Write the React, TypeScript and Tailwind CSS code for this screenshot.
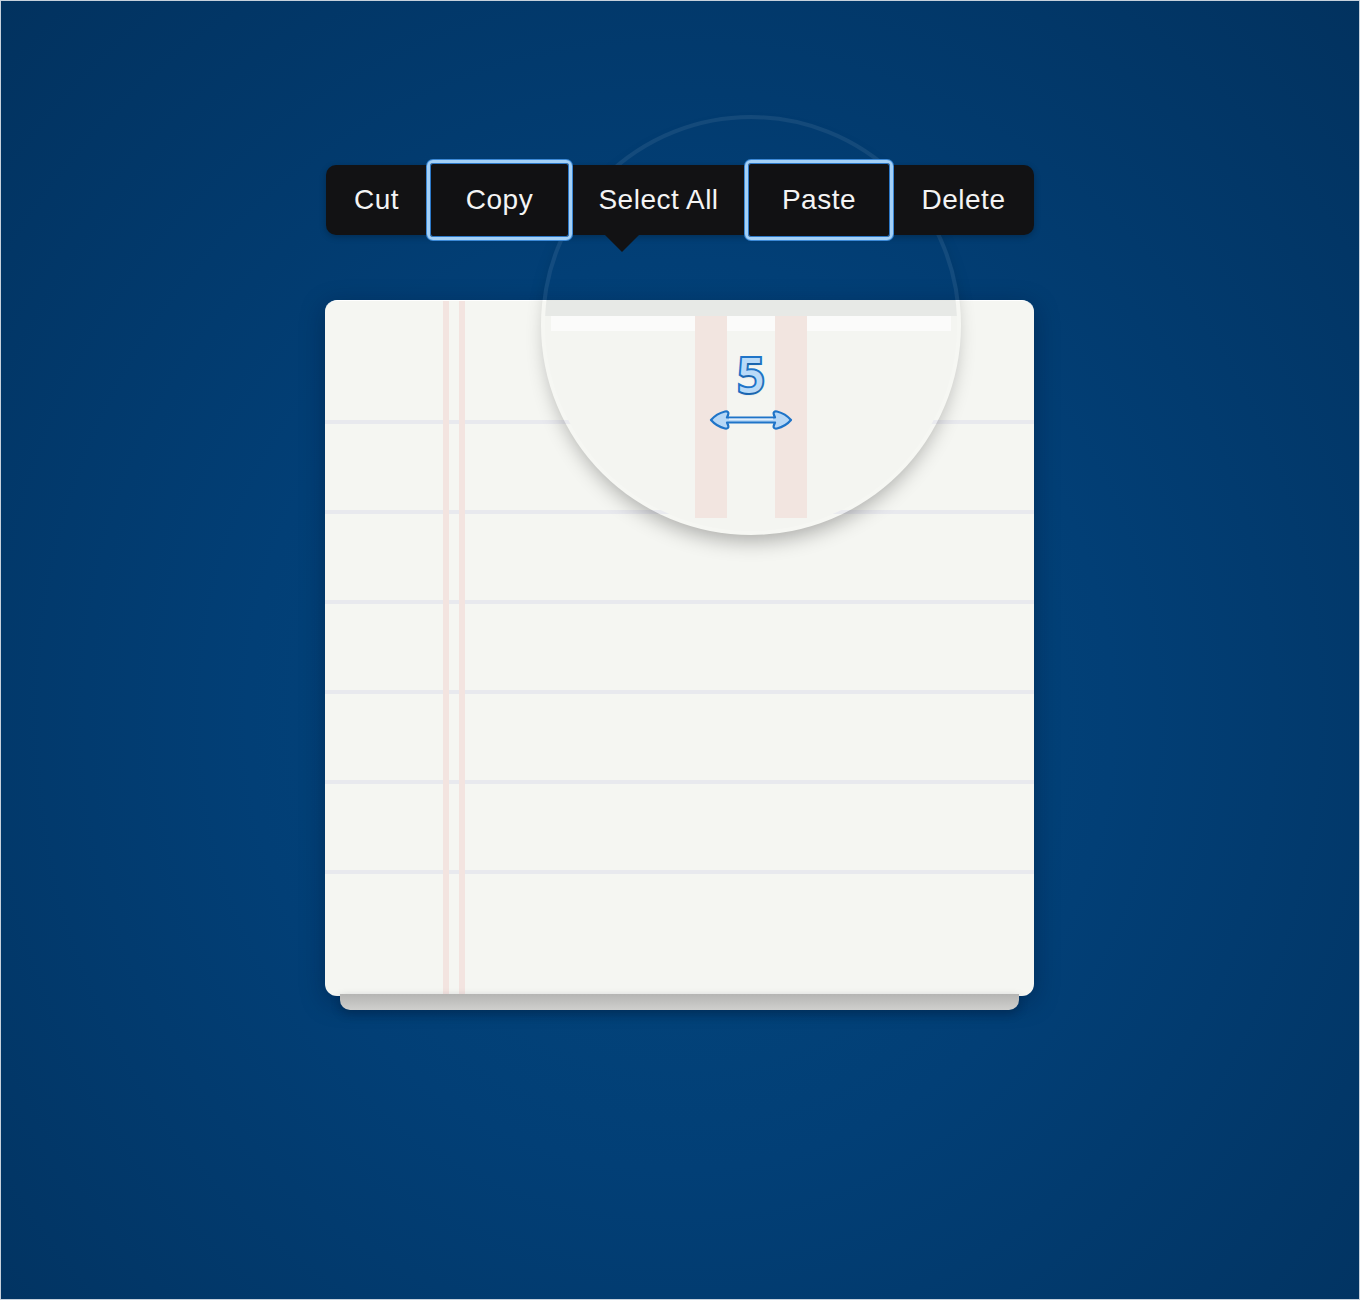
import React from 'react';

const menuFont = { fontFamily: '"Liberation Sans", Arial, sans-serif' };

function MenuItem({ label, width, active }: { label: string; width: string; active?: boolean }) {
  if (active) {
    return (
      <div className={`${width} h-[80px] self-center flex items-center justify-center rounded-[6px] border-[3px] border-[#a3d0f7] bg-[#111113] ring-1 ring-[#3b88d6] shadow-[inset_0_0_0_1px_#2c78c8]`}>
        <span className="text-[28px] tracking-[0.5px] text-[#f4f4f4]">{label}</span>
      </div>
    );
  }
  return (
    <div className={`${width} flex items-center justify-center`}>
      <span className="text-[28px] tracking-[0.5px] text-[#f4f4f4]">{label}</span>
    </div>
  );
}

function DoubleArrow() {
  return (
    <svg width="86" height="26" viewBox="0 0 86 26">
      <path
        d="M3 13 C6 9.5 11 6 17 4.5 C20 4 21 5.5 20 8 L19 10.5 L67 10.5 L66 8 C65 5.5 66 4 69 4.5 C75 6 80 9.5 83 13 C80 16.5 75 20 69 21.5 C66 22 65 20.5 66 18 L67 15.5 L19 15.5 L20 18 C21 20.5 20 22 17 21.5 C11 20 6 16.5 3 13 Z"
        fill="#b6d7f6"
        stroke="#1f74c8"
        strokeWidth="2.2"
        strokeLinejoin="round"
      />
      <path d="M21 12.2 L65 12.2" stroke="#ffffff" strokeWidth="1.2" opacity="0.75" />
    </svg>
  );
}

function Magnifier() {
  return (
    <div className="absolute left-[540px] top-[114px] z-10 w-[420px] h-[420px] rounded-full overflow-hidden border-[4px] border-white/[0.07] shadow-[0_12px_20px_-6px_rgba(0,0,0,0.3)]">
      <div className="h-[181px]" />
      <div className="relative h-[239px] bg-[#f4f5f1]">
        <div className="h-[16px] bg-[#e7e9e6]" />
        <div className="mx-[6px] h-[15px] bg-[#fbfbfa]" />
        <div className="absolute left-[150px] top-[16px] w-[32px] h-[202px] bg-[#f2e5e0]" />
        <div className="absolute left-[230px] top-[16px] w-[32px] h-[202px] bg-[#f2e5e0]" />
        <div className="absolute left-[166px] top-[51px] w-[80px] flex flex-col items-center">
          <span
            className="text-[48px] leading-none font-semibold text-[#b9daf8] [-webkit-text-stroke:4px_#1f74c8] [paint-order:stroke_fill] [text-shadow:0_2px_2px_rgba(0,0,0,0.15)]"
            style={{ fontFamily: '"Open Sans", "DejaVu Sans", sans-serif' }}
          >
            5
          </span>
        </div>
        <div className="absolute left-[163px] top-[107px]">
          <DoubleArrow />
        </div>
      </div>
    </div>
  );
}

export default function App() {
  return (
    <div
      className="relative w-[1360px] h-[1300px] overflow-hidden border border-[#c7d1dc] bg-[radial-gradient(ellipse_at_50%_55%,#03487f_0%,#023f76_45%,#02325f_100%)]"
      style={menuFont}
    >
      <div className="pt-[164px] pl-[325px] flex flex-col items-start">
        <div className="relative z-20 flex w-[708px] h-[70px] rounded-[10px] bg-[#121214] shadow-[0_2px_6px_rgba(0,0,0,0.25)]">
          <MenuItem label="Cut" width="w-[101px]" />
          <MenuItem label="Copy" width="w-[145px]" active />
          <MenuItem label="Select All" width="w-[173px]" />
          <MenuItem label="Paste" width="w-[148px]" active />
          <MenuItem label="Delete" width="w-[141px]" />
          <div className="absolute left-[279px] top-[70px] w-0 h-0 border-l-[17px] border-r-[17px] border-t-[17px] border-l-transparent border-r-transparent border-t-[#121214]" />
        </div>

        <div className="relative z-0 -ml-px mt-[65px] w-[709px] h-[696px] rounded-[12px] bg-[#f5f6f2] border-t border-white shadow-[0_6px_24px_rgba(0,15,40,0.35)]">
          <div className="pt-[119px] flex flex-col gap-[86px]">
            <div className="h-[4px] bg-[#e8e9ee]" />
            <div className="h-[4px] bg-[#e8e9ee]" />
            <div className="h-[4px] bg-[#e8e9ee]" />
            <div className="h-[4px] bg-[#e8e9ee]" />
            <div className="h-[4px] bg-[#e8e9ee]" />
            <div className="h-[4px] bg-[#e8e9ee]" />
          </div>
          <div className="absolute left-[118px] top-0 bottom-0 w-[6px] bg-[#f3e4e0]" />
          <div className="absolute left-[134px] top-0 bottom-0 w-[6px] bg-[#f3e4e0]" />
        </div>
        <div className="relative ml-[14px] -mt-[2px] w-[679px] h-[16px] rounded-b-[10px] bg-[linear-gradient(#b5b5b3,#cfcfcd)] shadow-[0_4px_10px_rgba(0,15,40,0.3)]" />
      </div>

      <Magnifier />
    </div>
  );
}
